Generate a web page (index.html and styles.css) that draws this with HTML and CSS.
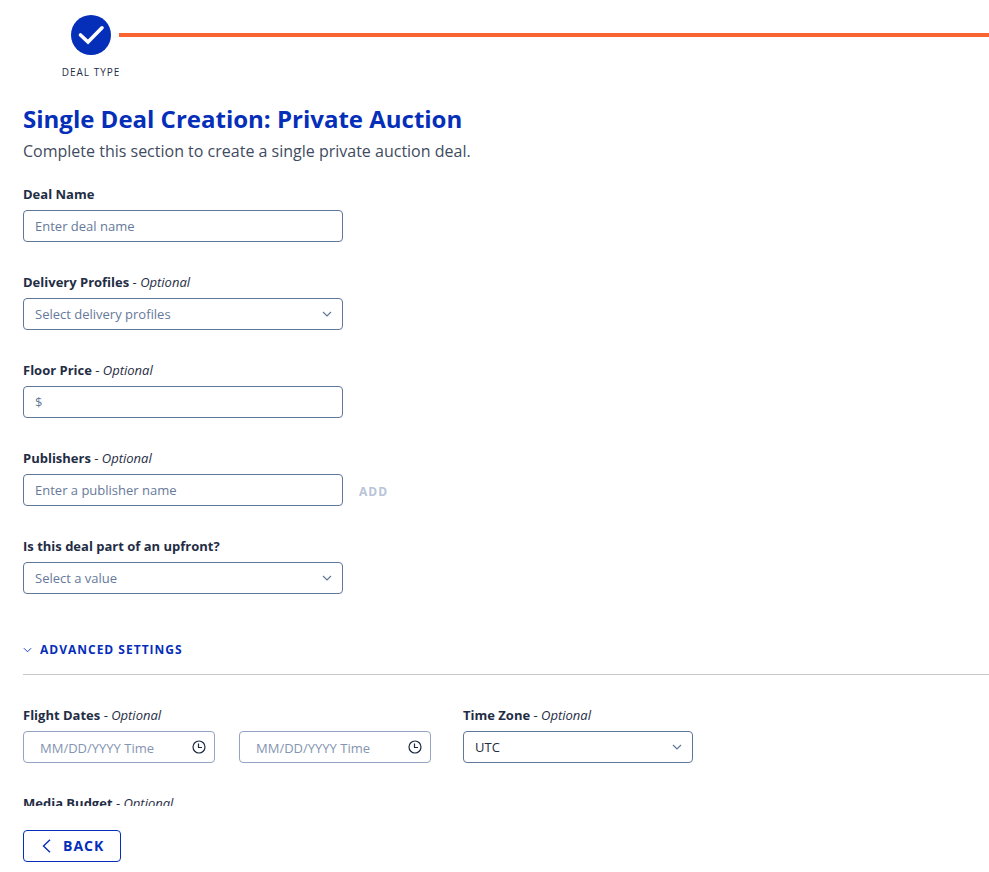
FILE: index.html
```html
<!DOCTYPE html>
<html lang="en">
<head>
<meta charset="utf-8">
<meta name="viewport" content="width=device-width, initial-scale=1">
<title>Single Deal Creation</title>
<link rel="stylesheet" href="styles.css">
</head>
<body>
<div class="page">
  <div class="stepper">
    <div class="step">
      <svg class="step-icon" viewBox="0 0 40 40" aria-hidden="true"><circle cx="20" cy="20" r="20"/><path d="M9.500 20 17 27 31 12.800"/></svg>
      <span class="step-label">DEAL TYPE</span>
    </div>
    <div class="step-line"></div>
  </div>

  <main class="content">
    <h1 class="title">Single Deal Creation: Private Auction</h1>
    <p class="subtitle">Complete this section to create a single private auction deal.</p>

    <form class="form">
      <div class="field">
        <label class="label" for="name">Deal Name</label>
        <input class="control" id="name" type="text" placeholder="Enter deal name">
      </div>
      <div class="field">
        <label class="label" for="profiles">Delivery Profiles <span class="optional">- <em>Optional</em></span></label>
        <div class="select">
          <select class="control empty" id="profiles"><option>Select delivery profiles</option></select>
          <svg class="chevron" viewBox="0 0 10 6" aria-hidden="true"><path d="M1 1 5 5 9 1"/></svg>
        </div>
      </div>
      <div class="field">
        <label class="label" for="floor">Floor Price <span class="optional">- <em>Optional</em></span></label>
        <input class="control" id="floor" type="text" placeholder="$">
      </div>
      <div class="field">
        <label class="label" for="publishers">Publishers <span class="optional">- <em>Optional</em></span></label>
        <div class="with-action">
          <input class="control" id="publishers" type="text" placeholder="Enter a publisher name">
          <button class="add" type="button" disabled>ADD</button>
        </div>
      </div>
      <div class="field">
        <label class="label" for="upfront">Is this deal part of an upfront?</label>
        <div class="select">
          <select class="control empty" id="upfront"><option>Select a value</option></select>
          <svg class="chevron" viewBox="0 0 10 6" aria-hidden="true"><path d="M1 1 5 5 9 1"/></svg>
        </div>
      </div>

      <div class="section">
        <button class="section-toggle" type="button" aria-expanded="true">
          <svg class="toggle-icon" viewBox="0 0 10 6" aria-hidden="true"><path d="M1 1 5 5 9 1"/></svg>
          ADVANCED SETTINGS
        </button>
      </div>

      <div class="row">
        <div class="field">
          <label class="label" id="dates-label" for="start">Flight Dates <span class="optional">- <em>Optional</em></span></label>
          <div class="dates">
            <div class="date">
              <input class="control" id="start" type="text" placeholder="MM/DD/YYYY Time">
              <svg class="clock" viewBox="0 0 14 14" aria-hidden="true"><circle cx="7" cy="7" r="6"/><path d="M6.500 3.500V7.500H10"/></svg>
            </div>
            <div class="date">
              <input class="control" type="text" placeholder="MM/DD/YYYY Time" aria-labelledby="dates-label">
              <svg class="clock" viewBox="0 0 14 14" aria-hidden="true"><circle cx="7" cy="7" r="6"/><path d="M6.500 3.500V7.500H10"/></svg>
            </div>
          </div>
        </div>
        <div class="field zone">
          <label class="label" for="zone">Time Zone <span class="optional">- <em>Optional</em></span></label>
          <div class="select">
            <select class="control" id="zone"><option>UTC</option></select>
            <svg class="chevron" viewBox="0 0 10 6" aria-hidden="true"><path d="M1 1 5 5 9 1"/></svg>
          </div>
        </div>
      </div>

      <div class="field">
        <label class="label" for="budget">Media Budget <span class="optional">- <em>Optional</em></span></label>
        <input class="control" id="budget" type="text">
      </div>
    </form>
  </main>

  <footer class="footer">
    <button class="back" type="button">
      <svg class="back-icon" viewBox="0 0 9 14" aria-hidden="true"><path d="M8 .8 1.500 7 8 13.200"/></svg>
      BACK
    </button>
  </footer>
</div>
</body>
</html>
```
FILE: styles.css
```css
* { box-sizing: border-box; }

body {
  margin: 0;
  background: #fff;
  color: #1f2d45;
  font: 13px/20px "Open Sans", sans-serif;
}

button, input, select { font: inherit; color: inherit; }

svg { fill: none; flex: none; }

.page {
  display: flex;
  flex-direction: column;
  height: 100vh;
}

.stepper {
  display: flex;
  align-items: flex-start;
  gap: 8px;
  padding: 15px 0 0 71px;
}

.step {
  display: flex;
  flex-direction: column;
  align-items: center;
  gap: 8px;
  width: 40px;
}

.step-icon { width: 40px; height: 40px; }
.step-icon circle { fill: #052eb9; }
.step-icon path {
  stroke: #fff;
  stroke-width: 3.6;
  stroke-linecap: round;
}

.step-label {
  font-size: 10px;
  line-height: 18px;
  letter-spacing: 1px;
  white-space: nowrap;
}

.step-line {
  flex: 1;
  height: 4px;
  margin-top: 18px;
  background: #f96332;
}

.content {
  flex: 1;
  min-height: 0;
  overflow: auto;
  scrollbar-width: none;
  padding: 22px 0 0 23px;
}

.title {
  margin: 0;
  color: #052eb9;
  font-size: 24px;
  line-height: 32px;
  font-weight: 700;
}

.subtitle {
  margin: 4px 0 0;
  color: #3f4b60;
  font-size: 16px;
  line-height: 24px;
}

.form { padding-top: 21px; }

.field {
  display: flex;
  flex-direction: column;
  gap: 6px;
  margin-bottom: 30px;
}

.label { font-weight: 700; }
.optional { font-weight: 400; }

.control {
  display: block;
  width: 320px;
  height: 32px;
  padding: 0 11px;
  border: 1px solid #5f7799;
  border-radius: 4px;
  background: #fff;
  appearance: none;
}

.control::placeholder { color: #66799a; opacity: 1; }
.control.empty { color: #66799a; }

.select, .date {
  position: relative;
  width: fit-content;
}

.chevron {
  position: absolute;
  top: 13px;
  right: 11px;
  width: 10px;
  height: 6px;
  stroke: #5f7799;
  stroke-width: 1.2;
  pointer-events: none;
}

.with-action {
  display: flex;
  align-items: center;
  gap: 16px;
}

.add {
  padding: 4px 0 0;
  border: 0;
  background: none;
  color: #b8c4d8;
  font-size: 12px;
  font-weight: 700;
  letter-spacing: 1px;
}

.section {
  padding: 16px 0 14px;
  margin-bottom: 30px;
  border-bottom: 1px solid #c6c8cc;
}

.section-toggle {
  display: flex;
  align-items: center;
  gap: 8px;
  padding: 0;
  border: 0;
  background: none;
  color: #052eb9;
  font-size: 12px;
  font-weight: 700;
  letter-spacing: 1px;
}

.toggle-icon { width: 9px; height: 6px; stroke: #052eb9; }

.row { display: flex; gap: 32px; }

.dates { display: flex; gap: 24px; }

.date .control {
  width: 192px;
  padding: 2px 32px 0 16px;
  border-color: #93a3c1;
}
.date .control::placeholder { color: #8494b1; }

.clock {
  position: absolute;
  top: 9px;
  right: 9px;
  width: 14px;
  height: 14px;
  stroke: #1b2a41;
  stroke-width: 1.2;
}

.zone .control { width: 230px; }

.footer { padding: 24px 23px 10px; }

.back {
  display: flex;
  align-items: center;
  gap: 12px;
  height: 32px;
  padding: 0 16px 0 18px;
  border: 1px solid #052eb9;
  border-radius: 4px;
  background: #fff;
  color: #052eb9;
  font-size: 14px;
  font-weight: 700;
  letter-spacing: 1px;
}

.back-icon {
  width: 9px;
  height: 14px;
  stroke: #052eb9;
  stroke-width: 1.4;
}
```
